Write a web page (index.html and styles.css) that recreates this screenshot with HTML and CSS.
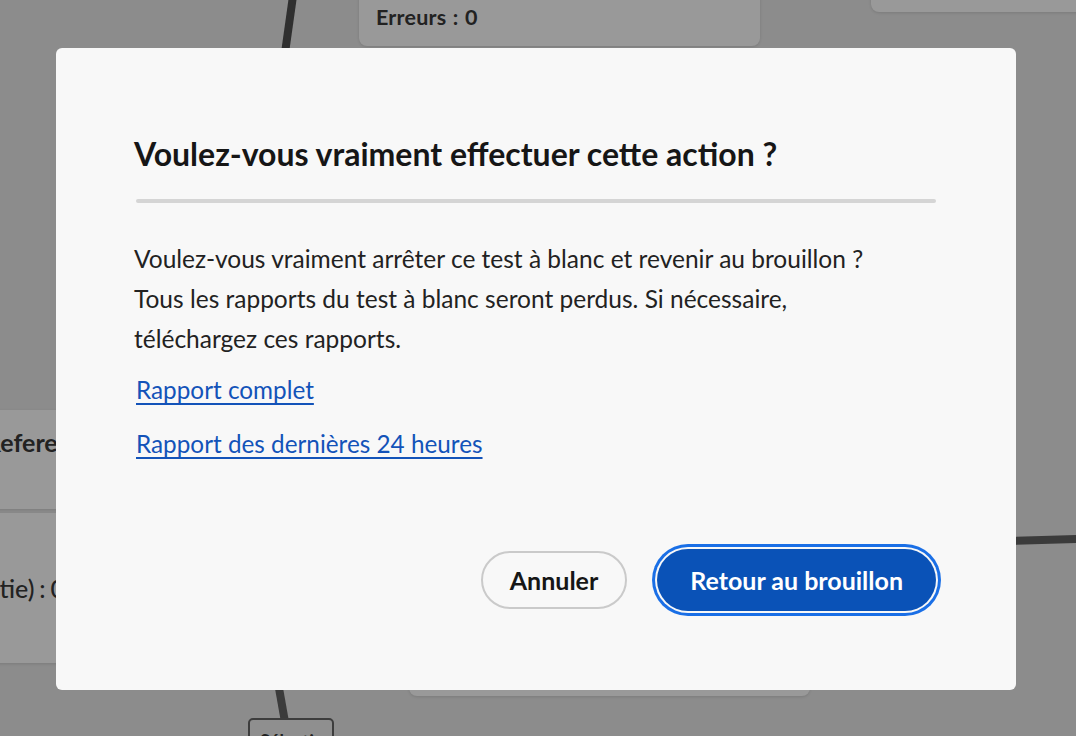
FILE: index.html
```html
<!DOCTYPE html>
<html lang="fr">
<head>
<meta charset="utf-8">
<title>Retour au brouillon</title>
<link rel="stylesheet" href="styles.css">
</head>
<body>
<div class="canvas">
  <svg class="links" width="1076" height="736" viewBox="0 0 1076 736">
    <line x1="293" y1="-4" x2="284" y2="60" class="edge edge-dark"/>
    <line x1="274" y1="660" x2="285" y2="722" class="edge"/>
    <line x1="1000" y1="541.3" x2="1080" y2="538.8" class="edge"/>
  </svg>

  <div class="node node-top">
    <span class="node-label">Erreurs : 0</span>
  </div>
  <div class="node node-topright"></div>
  <div class="node node-left-a"><span class="node-big">Reference</span></div>
  <div class="node node-left-b"><span class="node-mid">(sortie) : 0</span></div>
  <div class="node node-bottom"></div>
  <div class="node node-small"><span class="node-tiny">Sélection</span></div>
</div>

<div class="dialog" role="dialog" aria-labelledby="dlg-title">
  <h2 id="dlg-title" class="dialog-title">Voulez-vous vraiment effectuer cette action ?</h2>
  <hr class="dialog-divider">
  <div class="dialog-body">
    <p class="dialog-text">Voulez-vous vraiment arrêter ce test à blanc et revenir au brouillon ?<br>Tous les rapports du test à blanc seront perdus. Si nécessaire,<br>téléchargez ces rapports.</p>
    <a class="dialog-link" href="#">Rapport complet</a>
    <a class="dialog-link" href="#">Rapport des dernières 24 heures</a>
  </div>
  <div class="dialog-footer">
    <button class="btn btn-secondary" type="button">Annuler</button>
    <button class="btn btn-primary" type="button">Retour au brouillon</button>
  </div>
</div>
</body>
</html>
```

FILE: styles.css
```css
html, body {
  margin: 0;
  padding: 0;
}
body {
  width: 1076px;
  height: 736px;
  overflow: hidden;
  background: #8c8c8c;
  font-family: Lato, "Liberation Sans", sans-serif;
  position: relative;
}

/* background workflow canvas (dimmed) */
.canvas {
  position: absolute;
  inset: 0;
  overflow: hidden;
}
.links {
  position: absolute;
  left: 0;
  top: 0;
}
.edge {
  stroke: #3b3b3b;
  stroke-width: 8;
}
.edge-dark {
  stroke: #2f2f2f;
}
.node {
  position: absolute;
  background: #999999;
  border-radius: 8px;
  box-shadow: 0 1px 3px rgba(0,0,0,0.12);
  color: #222;
}
.node-top {
  left: 359px;
  top: -40px;
  width: 401px;
  height: 86px;
}
.node-label {
  position: absolute;
  left: 17px;
  top: 44px;
  font-size: 21.5px;
  font-weight: 700;
  letter-spacing: 0.2px;
  word-spacing: 1px;
}
.node-topright {
  left: 871px;
  top: -60px;
  width: 260px;
  height: 72px;
}
.node-left-a {
  left: -120px;
  top: 410px;
  width: 400px;
  height: 99px;
  border-radius: 0 8px 0 0;
}
.node-left-b {
  left: -120px;
  top: 513px;
  width: 400px;
  height: 150px;
  border-radius: 0 0 8px 0;
}
.node-big {
  position: absolute;
  left: 105px;
  top: 17px;
  font-size: 25px;
  font-weight: 700;
}
.node-mid {
  position: absolute;
  left: 79px;
  top: 60px;
  font-size: 25px;
  font-weight: 500;
  word-spacing: -1.5px;
}
.node-bottom {
  left: 409px;
  top: 600px;
  width: 401px;
  height: 96px;
}
.node-small {
  left: 248px;
  top: 718px;
  width: 82px;
  height: 40px;
  background: #8f8f8f;
  border: 2px solid #3d3d3d;
  border-radius: 5px;
  box-shadow: none;
}
.node-tiny {
  position: absolute;
  left: 10px;
  top: 10px;
  font-size: 18px;
  font-weight: 700;
}

/* dialog */
.dialog {
  position: absolute;
  left: 56px;
  top: 48px;
  width: 960px;
  height: 642px;
  box-sizing: border-box;
  padding: 86px 80px 79px 80px;
  background: #f8f8f8;
  border-radius: 6px;
  display: flex;
  flex-direction: column;
  color: #222;
}
.dialog-title {
  margin: 0 0 0 -2px;
  font-size: 32px;
  line-height: 40px;
  font-weight: 700;
  color: #161616;
  letter-spacing: 0;
}
.dialog-divider {
  margin: 25px 0 0 0;
  border: 0;
  height: 4px;
  border-radius: 2px;
  background: #d5d5d5;
}
.dialog-body {
  margin-top: 36px;
  display: flex;
  flex-direction: column;
  align-items: flex-start;
}
.dialog-text {
  margin: 0 0 0 -2px;
  font-size: 24.5px;
  line-height: 40px;
  color: #222;
}
.dialog-link {
  font-size: 24.3px;
  line-height: 30px;
  color: #1353b9;
  text-decoration: underline;
  text-decoration-thickness: 2px;
  text-underline-offset: 4px;
  margin-top: 16px;
}
.dialog-link + .dialog-link {
  margin-top: 24px;
}
.dialog-footer {
  margin-top: auto;
  display: flex;
  justify-content: flex-end;
  align-items: center;
  gap: 30px;
}
.btn {
  font-family: Lato, "Liberation Sans", sans-serif;
  font-size: 25px;
  font-weight: 700;
  border-radius: 32px;
  cursor: pointer;
  box-sizing: border-box;
}
.btn-secondary {
  height: 58px;
  padding: 0 27px;
  background: #f8f8f8;
  border: 2px solid #cacaca;
  color: #161616;
}
.btn-primary {
  height: 62px;
  padding: 0 33px;
  background: #0a52b7;
  border: 0;
  color: #fff;
  box-shadow: 0 0 0 2px #f8f8f8, 0 0 0 5px #1a6fe6;
}
```
